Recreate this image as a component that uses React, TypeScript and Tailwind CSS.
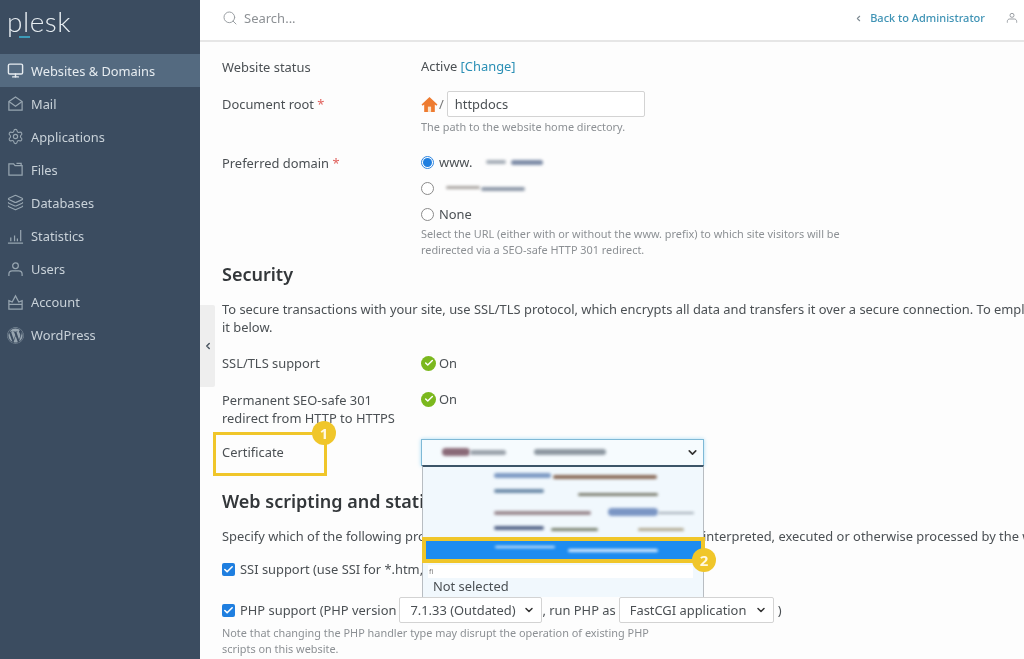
import { ChevronDown, ChevronLeft, Layers, Monitor, Search, Settings, Check } from "lucide-react";
import { FaWordpress } from "react-icons/fa";
import type { ReactNode } from "react";

const iconClass = "h-[17px] w-[17px] shrink-0";

function MailIcon() {
  return (
    <svg viewBox="0 0 18 18" className={iconClass} fill="none" stroke="currentColor" strokeWidth="1.3">
      <path d="M2 7 9 2l7 5v9H2z" />
      <path d="M2 7l7 5 7-5" />
    </svg>
  );
}

function FilesIcon() {
  return (
    <svg viewBox="0 0 18 18" className={iconClass} fill="none" stroke="currentColor" strokeWidth="1.3">
      <path d="M2 15V3h5l1.5 2H16v10z" />
      <path d="M10 2.5h5V5" />
    </svg>
  );
}

function StatsIcon() {
  return (
    <svg viewBox="0 0 18 18" className={iconClass} fill="none" stroke="currentColor" strokeWidth="1.3">
      <path d="M1 16h16M4 14v-4M8 14V8M11 14v-3M14.500 14V2" />
    </svg>
  );
}

function UserIcon({ className = iconClass }: { className?: string }) {
  return (
    <svg viewBox="0 0 18 18" className={className} fill="none" stroke="currentColor" strokeWidth="1.3">
      <circle cx="9" cy="5" r="3" />
      <path d="M2 16v-2c0-2 1.500-3.500 3.500-3.500h7c2 0 3.500 1.500 3.500 3.500v2" />
    </svg>
  );
}

function AccountIcon() {
  return (
    <svg viewBox="0 0 18 18" className={iconClass} fill="none" stroke="currentColor" strokeWidth="1.3">
      <path d="M2 7l3.500 1.500L9 2l3.500 6.500L16 7v9H2z" />
      <path d="M2 11h14" />
    </svg>
  );
}

const nav: { label: string; icon: ReactNode }[] = [
  { label: "Websites & Domains", icon: <Monitor className={iconClass} strokeWidth={2} /> },
  { label: "Mail", icon: <MailIcon /> },
  { label: "Applications", icon: <Settings className={iconClass} strokeWidth={1.6} /> },
  { label: "Files", icon: <FilesIcon /> },
  { label: "Databases", icon: <Layers className={iconClass} strokeWidth={1.6} /> },
  { label: "Statistics", icon: <StatsIcon /> },
  { label: "Users", icon: <UserIcon /> },
  { label: "Account", icon: <AccountIcon /> },
  { label: "WordPress", icon: <FaWordpress className={iconClass} /> },
];

function Sidebar() {
  return (
    <aside className="h-full w-[200px] shrink-0 bg-[#3b4c60] text-[12.850px] text-[#d5dde3]">
      <div className="relative h-[54px]">
        <span className="absolute left-[7px] top-[1px] font-['Lato',sans-serif] text-[28px] font-light leading-[40px] tracking-[0.5px] text-[#e8eef2]">
          plesk
        </span>
        <div className="absolute left-[19px] top-[36px] h-[2px] w-[11px] bg-[#3d9bb8]" />
      </div>
      {nav.map((item, i) => (
        <div
          key={item.label}
          className={`flex h-[33.100px] items-center gap-[7px] pl-[7px] ${
            i === 0 ? "bg-[#546a80] text-[#e6ecf0]" : "text-[#c9d2d9]"
          }`}
        >
          <span className={i === 0 ? "text-[#e6ecf0]" : "text-[#97a5b0]"}>{item.icon}</span>
          <span>{item.label}</span>
        </div>
      ))}
    </aside>
  );
}

function Topbar() {
  return (
    <header className="flex h-[42px] items-center border-b-2 border-[#e6e6e6] bg-white pb-[4px] pl-[22px] pr-[6px]">
      <Search className="h-[16px] w-[16px] text-[#9a9fa3]" strokeWidth={1.5} />
      <span className="ml-[6px] text-[13px] text-[#8d9195]">Search...</span>
      <ChevronLeft className="ml-auto h-[9px] w-[9px] text-[#7d8a92]" strokeWidth={3} />
      <span className="ml-[7px] text-[11px] font-medium text-[#3f93b5]">Back to Administrator</span>
      <UserIcon className="ml-[21px] h-[12px] w-[12px] text-[#8b9095]" />
    </header>
  );
}

function Row({ label, required, className, children }: { label: ReactNode; required?: boolean; className: string; children?: ReactNode }) {
  return (
    <div className={`flex ${className}`}>
      <div className="w-[199px] shrink-0">
        {label}
        {required && <span className="text-[#e0605c]"> *</span>}
      </div>
      {children}
    </div>
  );
}

function Radio({ checked }: { checked?: boolean }) {
  return (
    <span
      className={`flex h-[13px] w-[13px] shrink-0 items-center justify-center rounded-full border bg-white ${
        checked ? "border-[#2f86e0]" : "border-[#8b8b8b]"
      }`}
    >
      {checked && <span className="h-[9px] w-[9px] rounded-full bg-[#1f7fe0]" />}
    </span>
  );
}

function OnStatus() {
  return (
    <div className="flex items-center gap-[3px]">
      <span className="flex h-[15px] w-[15px] items-center justify-center rounded-full bg-[#7bb81e] text-white">
        <Check className="h-[10px] w-[10px]" strokeWidth={3.5} />
      </span>
      <span>On</span>
    </div>
  );
}

function Checkbox() {
  return (
    <span className="flex h-[13px] w-[13px] shrink-0 items-center justify-center rounded-[2px] bg-[#1f7fe0] text-white">
      <Check className="h-[11px] w-[11px]" strokeWidth={3.5} />
    </span>
  );
}

function SelectBox({ text, className }: { text: string; className: string }) {
  return (
    <span className={`flex h-[26px] items-center justify-between rounded-[2px] border border-[#d3d3d3] bg-white pl-[10px] pr-[6px] ${className}`}>
      {text}
      <ChevronDown className="h-[12px] w-[12px] text-[#333]" strokeWidth={3} />
    </span>
  );
}

function Smudge({ className }: { className: string }) {
  return <span className={`absolute rounded-full blur-[1.500px] ${className}`} />;
}

function Badge({ n, className }: { n: number; className: string }) {
  return (
    <span className={`absolute flex h-[24px] w-[24px] items-center justify-center rounded-full bg-[#f0c62a] text-[15px] font-bold text-[#fff8e0] ${className}`}>
      {n}
    </span>
  );
}

function CertificateDropdown() {
  return (
    <>
      <div className="absolute left-[221px] top-[439px] h-[27px] w-[283px] border border-[#7fb9d6] bg-[#f6fbfe] shadow-[0_0_4px_#a8dcf5]">
        <Smudge className="left-[20px] top-[8px] h-[8px] w-[28px] bg-[#8a6a78]" />
        <Smudge className="left-[48px] top-[10px] h-[5px] w-[36px] bg-[#99a1aa]" />
        <Smudge className="left-[112px] top-[9px] h-[6px] w-[72px] bg-[#8d97a1]" />
        <ChevronDown className="absolute right-[4px] top-[6px] h-[13px] w-[13px] text-[#333]" strokeWidth={3} />
      </div>
      <div className="absolute left-[222px] top-[465px] h-[132px] w-[282px] border-x border-t-2 border-x-[#b8bdc2] border-t-[#3c5568] bg-[#f1f8fd] text-[12.900px]">
        <Smudge className="left-[71px] top-[6px] h-[5px] w-[57px] bg-[#7d9ac4]" />
        <Smudge className="left-[130px] top-[8px] h-[4px] w-[104px] bg-[#8a6a58]" />
        <Smudge className="left-[71px] top-[22px] h-[4px] w-[50px] bg-[#6b8aa8]" />
        <Smudge className="left-[155px] top-[26px] h-[3px] w-[80px] bg-[#7d7f70]" />
        <Smudge className="left-[71px] top-[44px] h-[4px] w-[97px] bg-[#9a8a90]" />
        <Smudge className="left-[185px] top-[41px] h-[8px] w-[50px] bg-[#7b96c4]" />
        <Smudge className="left-[235px] top-[45px] h-[2px] w-[36px] bg-[#a0aab4]" />
        <Smudge className="left-[71px] top-[59px] h-[4px] w-[50px] bg-[#55668a]" />
        <Smudge className="left-[128px] top-[61px] h-[3px] w-[47px] bg-[#77806e]" />
        <Smudge className="left-[215px] top-[61px] h-[3px] w-[46px] bg-[#b0a890]" />
        <div className="absolute left-0 top-[74px] h-[18px] w-full bg-[#1e8cf0]">
          <Smudge className="left-[72px] top-[5px] h-[2px] w-[60px] bg-[#dcecfb]" />
          <Smudge className="left-[145px] top-[8px] h-[3px] w-[90px] bg-[#dcecfb]" />
        </div>
        <div className="absolute left-[5px] top-[98px] flex h-[13px] w-[265px] items-center bg-white pl-[1px] text-[7px] leading-none text-[#777]">
          fi
        </div>
        <div className="absolute left-[10px] top-[110px] leading-[18px] text-[#4a4f53]">Not selected</div>
      </div>
      <div className="absolute left-[222px] top-[537px] h-[26px] w-[283px] border-[4px] border-[#f0c62a]" />
    </>
  );
}

export default function App() {
  return (
    <div className="flex h-[659px] w-[1024px] overflow-hidden bg-white font-['Noto_Sans',sans-serif] text-[12.900px] leading-[18px] text-[#4b5054] blur-[0.3px]">
      <Sidebar />
      <main className="relative min-w-0 flex-1 overflow-hidden bg-[#fdfdfd]">
        <Topbar />
        <div className="whitespace-nowrap pl-[22px] pt-[16px]">
          <Row label="Website status" className="h-[18px]">
            <span className="-mt-px">
              Active <span className="text-[#2a8fb5]">[Change]</span>
            </span>
          </Row>
          <Row label="Document root" required className="mt-[15px] h-[26px] items-center">
            <div className="flex items-center">
              <svg viewBox="0 0 16 16" className="h-[17px] w-[17px]">
                <path d="M8 1 0.500 8l1 1.200L3 8v7h10V8l1.500 1.200 1-1.200z" fill="#ee7b30" />
                <rect x="6.500" y="10" width="3" height="5" fill="#fbe3c8" />
              </svg>
              <span className="ml-[1px] text-[#777]">/</span>
              <span className="ml-[3px] flex h-[26px] w-[198px] items-center rounded-[2px] border border-[#d3d3d3] bg-white pl-[7px]">httpdocs</span>
            </div>
          </Row>
          <div className="ml-[199px] mt-[2px] text-[10.900px] leading-[16px] text-[#8c9094]">The path to the website home directory.</div>
          <Row
            label={
              <span className="relative top-[5px]">
                Preferred domain<span className="text-[#e0605c]"> *</span>
              </span>
            }
            className="mt-[14px] items-start"
          >
            <div>
              <div className="flex h-[26px] items-center gap-[5px]">
                <Radio checked />
                <span className="relative">
                  www.
                  <Smudge className="left-[47px] top-[7px] h-[4px] w-[20px] bg-[#a4acb6]" />
                  <Smudge className="left-[72px] top-[7px] h-[5px] w-[32px] bg-[#7c8ba6]" />
                </span>
              </div>
              <div className="relative flex h-[26px] items-center">
                <Radio />
                <Smudge className="left-[25px] top-[11px] h-[3px] w-[34px] bg-[#a8a4a0]" />
                <Smudge className="left-[60px] top-[12px] h-[4px] w-[44px] bg-[#8d98a8]" />
              </div>
              <div className="flex h-[26px] items-center gap-[5px]">
                <Radio />
                <span>None</span>
              </div>
            </div>
          </Row>
          <div className="ml-[199px] mt-[-1px] text-[10.900px] leading-[16px] text-[#8c9094]">
            <div>Select the URL (either with or without the www. prefix) to which site visitors will be</div>
            <div>redirected via a SEO-safe HTTP 301 redirect.</div>
          </div>
          <h2 className="mt-[4px] text-[18px] font-semibold leading-[24px] text-[#33373a]">Security</h2>
          <div className="mt-[14px]">
            <div>To secure transactions with your site, use SSL/TLS protocol, which encrypts all data and transfers it over a secure connection. To employ SSL/TLS, select a</div>
            <div>it below.</div>
          </div>
          <Row label="SSL/TLS support" className="mt-[18px] h-[18px]">
            <OnStatus />
          </Row>
          <Row
            label={
              <>
                <div>Permanent SEO-safe 301</div>
                <div>redirect from HTTP to HTTPS</div>
              </>
            }
            className="mt-[19px] h-[36px]"
          >
            <div className="-mt-px">
              <OnStatus />
            </div>
          </Row>
          <Row label="Certificate" className="mt-[16px] h-[18px]" />
          <h2 className="mt-[28px] text-[18px] font-semibold leading-[24px] text-[#33373a]">Web scripting and statistics</h2>
          <div className="mt-[14px]">Specify which of the following programs and the scripting languages should be interpreted, executed or otherwise processed by the web server.</div>
          <div className="mt-[15px] flex h-[18px] items-center gap-[5px]">
            <Checkbox />
            <span>SSI support (use SSI for *.htm, *.html files)</span>
          </div>
          <div className="mt-[19px] flex h-[26px] items-center">
            <Checkbox />
            <span className="ml-[5px]">PHP support (PHP version</span>
            <SelectBox text="7.1.33 (Outdated)" className="ml-[3px] w-[143px]" />
            <span>, run PHP as</span>
            <SelectBox text="FastCGI application" className="ml-[3px] w-[155px]" />
            <span className="ml-[4px]">)</span>
          </div>
          <div className="mt-[2px] text-[10.900px] leading-[16px] text-[#8c9094]">
            <div>Note that changing the PHP handler type may disrupt the operation of existing PHP</div>
            <div>scripts on this website.</div>
          </div>
        </div>

        <button className="absolute left-0 top-[305px] flex h-[82px] w-[15px] items-center justify-center rounded-r-[2px] bg-[#eeeeee] text-[#4a5560]">
          <ChevronLeft className="h-[10px] w-[10px]" strokeWidth={3.5} />
        </button>

        <div className="absolute left-[13px] top-[432px] h-[44px] w-[114px] border-[3px] border-[#f0c62a]" />
        <Badge n={1} className="left-[112px] top-[421px]" />
        <CertificateDropdown />
        <Badge n={2} className="left-[492px] top-[548px]" />
      </main>
    </div>
  );
}
